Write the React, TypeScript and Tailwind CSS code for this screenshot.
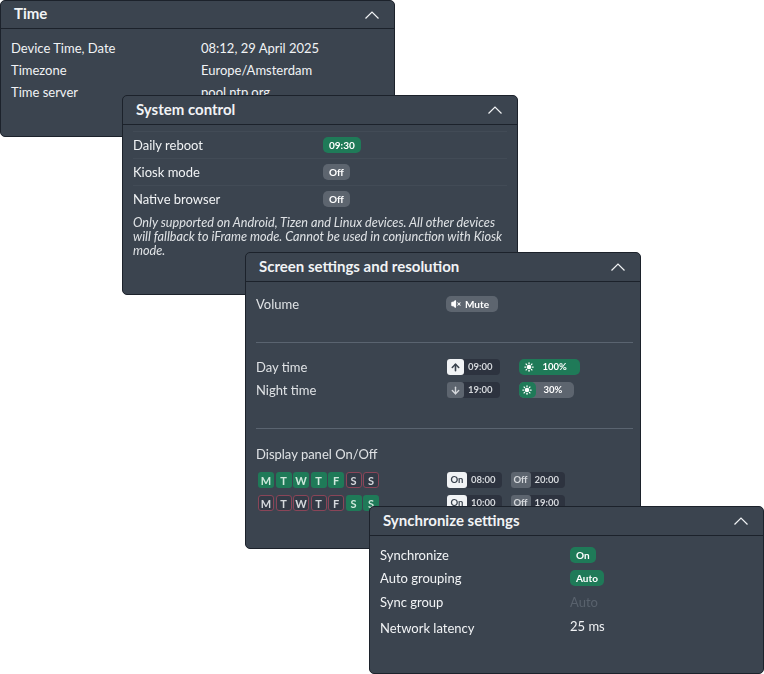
import React from "react";
import { Sun, ArrowUp, ArrowDown, VolumeX } from "lucide-react";

function Panel({
  title,
  className,
  headerClassName = "h-[29px]",
  children,
}: {
  title: string;
  className: string;
  headerClassName?: string;
  children: React.ReactNode;
}) {
  return (
    <section
      className={[
        "absolute flex flex-col rounded-[5px] border border-[#1c222b] bg-[#3b444f] text-[#f1f3f5]",
        className,
      ].join(" ")}
    >
      <header
        className={[
          "flex shrink-0 items-center justify-between border-b border-[#1c222b] pl-[13px] pr-[15px]",
          headerClassName,
        ].join(" ")}
      >
        <h2 className="pb-[2px] text-[15px] font-bold leading-none">{title}</h2>
        <svg width="14" height="8" viewBox="0 0 14 8" fill="none" stroke="currentColor" strokeWidth="1.2">
          <path d="M0.5 7.5 L7 1 L13.5 7.5" />
        </svg>
      </header>
      {children}
    </section>
  );
}

function Row({ label, value, className }: { label: string; value: React.ReactNode; className: string }) {
  return (
    <div className={["flex items-center text-[13px] leading-none", className].join(" ")}>
      <span className="w-[190px] shrink-0">{label}</span>
      {value}
    </div>
  );
}

function Pill({ children, green, className = "" }: { children: React.ReactNode; green?: boolean; className?: string }) {
  return (
    <span
      className={[
        "inline-flex h-4 items-center rounded-[5px] px-1.5 text-[10px] font-bold leading-none text-white",
        green ? "bg-[#1f7a58]" : "bg-[#5d656f]",
        className,
      ].join(" ")}
    >
      {children}
    </span>
  );
}

function Days({ on }: { on: boolean[] }) {
  const letters = ["M", "T", "W", "T", "F", "S", "S"];
  return (
    <div className="flex gap-[1.5px]">
      {letters.map((d, i) => (
        <span
          key={i}
          className={[
            "flex size-4 items-center justify-center rounded-[3px] text-[11px] font-bold leading-none",
            on[i] ? "bg-[#1f7a58] text-[#cfe8dc]" : "border-[1.5px] border-[#8a4558] bg-[#333a46] text-[#d5d8dc]",
          ].join(" ")}
        >
          {d}
        </span>
      ))}
    </div>
  );
}

function TimeChip({ tag, time, light, wide }: { tag: React.ReactNode; time: string; light?: boolean; wide?: boolean }) {
  return (
    <span
      className={[
        "flex h-4 items-center rounded-[4px] bg-[#2d333f] text-[9.5px] font-bold leading-none text-[#d5d8dc]",
        wide ? "pr-1.5" : "pr-[7px]",
      ].join(" ")}
    >
      <span
        className={[
          "mr-1 flex h-4 items-center justify-center rounded-[3px]",
          wide ? "w-5" : "w-[17px]",
          light ? "bg-[#f1f3f5] text-[#3a434e]" : "bg-[#5d656f] text-[#d5d8dc]",
        ].join(" ")}
      >
        {tag}
      </span>
      {time}
    </span>
  );
}

export default function App() {
  return (
    <div className="relative h-[674px] w-[764px] overflow-hidden bg-white font-['Lato','Noto_Sans',sans-serif]">
      {/* Time */}
      <Panel title="Time" headerClassName="h-[28px]" className="left-0 top-0 h-[137px] w-[395px]">
        <div className="flex flex-col gap-[9px] pl-[10px] pt-[13px]">
          <Row label="Device Time, Date" value="08:12, 29 April 2025" className="h-[13px]" />
          <Row label="Timezone" value="Europe/Amsterdam" className="h-[13px]" />
          <Row label="Time server" value="pool.ntp.org" className="h-[13px]" />
        </div>
      </Panel>

      {/* System control */}
      <Panel title="System control" className="left-[122px] top-[95px] h-[200px] w-[396px] blur-[0.4px]">
        <div className="flex flex-col pl-[10px] pr-[4px] pt-[6px]">
          <Row label="Daily reboot" value={<Pill green>09:30</Pill>} className="mr-[6px] h-[27px] border-t border-[#424b56]" />
          <Row label="Kiosk mode" value={<Pill>Off</Pill>} className="mr-[6px] h-[27px] border-t border-[#424b56]" />
          <Row label="Native browser" value={<Pill>Off</Pill>} className="mr-[6px] h-[27px] border-t border-[#424b56]" />
          <p className="mt-[3px] text-[12.7px] italic leading-[14px] text-[#dfe2e5]">
            Only supported on Android, Tizen and Linux devices. All other devices will fallback to iFrame mode. Cannot
            be used in conjunction with Kiosk mode.
          </p>
        </div>
      </Panel>

      {/* Screen settings */}
      <Panel title="Screen settings and resolution" className="left-[245px] top-[252px] h-[297px] w-[396px] blur-[0.4px]">
        <div className="flex flex-col pl-[10px] pr-[7px] pt-[14px] text-[#dfe2e5]">
          <Row
            label="Volume"
            value={
              <Pill className="w-[52px] gap-1 bg-[#5d656f] px-[5px] text-[9.5px]">
                <VolumeX className="size-[10px]" fill="currentColor" strokeWidth={2.5} />
                Mute
              </Pill>
            }
            className="h-4"
          />
          <hr className="mt-[30px] border-[#5a6470]" />
          <div className="mt-[16px] flex flex-col gap-[7px]">
            <Row
              label="Day time"
              value={
                <span className="ml-px flex items-center gap-[19px]">
                  <TimeChip light tag={<ArrowUp className="size-[11px]" strokeWidth={3.5} />} time="09:00" />
                  <span className="flex h-4 w-[61px] items-center gap-[9px] rounded-[5px] bg-[#1f7a58] pl-[5px] text-[9.5px] font-bold leading-none text-white">
                    <Sun className="size-[10px]" fill="currentColor" strokeWidth={3} />
                    100%
                  </span>
                </span>
              }
              className="h-4"
            />
            <Row
              label="Night time"
              value={
                <span className="ml-px flex items-center gap-[19px]">
                  <TimeChip tag={<ArrowDown className="size-[11px]" strokeWidth={3} />} time="19:00" />
                  <span className="flex h-4 w-[55px] items-center rounded-[5px] bg-[#5d656f] text-[9.5px] font-bold leading-none text-white">
                    <span className="mr-2 flex h-4 w-[17px] items-center justify-center rounded-[5px] bg-[#1f7a58]">
                      <Sun className="size-[10px]" fill="currentColor" strokeWidth={3} />
                    </span>
                    30%
                  </span>
                </span>
              }
              className="h-4"
            />
          </div>
          <hr className="mt-[30px] border-[#5a6470]" />
          <div className="mt-[19px] text-[13px] leading-none">Display panel On/Off</div>
          <div className="mt-[11px] flex flex-col gap-[7px]">
            <div className="flex items-center">
              <div className="w-[191px] pl-[2px]">
                <Days on={[true, true, true, true, true, false, false]} />
              </div>
              <span className="flex items-center gap-[9px]">
                <TimeChip light wide tag="On" time="08:00" />
                <TimeChip wide tag="Off" time="20:00" />
              </span>
            </div>
            <div className="flex items-center">
              <div className="w-[191px] pl-[2px]">
                <Days on={[false, false, false, false, false, true, true]} />
              </div>
              <span className="flex items-center gap-[9px]">
                <TimeChip light wide tag="On" time="10:00" />
                <TimeChip wide tag="Off" time="19:00" />
              </span>
            </div>
          </div>
        </div>
      </Panel>

      {/* Synchronize settings */}
      <Panel title="Synchronize settings" className="left-[369px] top-[506px] h-[168px] w-[395px]">
        <div className="flex flex-col pl-[10px] pt-[11px]">
          <Row label="Synchronize" value={<Pill green>On</Pill>} className="h-4" />
          <Row label="Auto grouping" value={<Pill green>Auto</Pill>} className="mt-[7px] h-4" />
          <Row label="Sync group" value={<span className="text-[#59626d]">Auto</span>} className="mt-2 h-4" />
          <Row label="Network latency" value={<span className="-mt-[3px]">25 ms</span>} className="mt-2 h-5" />
        </div>
      </Panel>
    </div>
  );
}
